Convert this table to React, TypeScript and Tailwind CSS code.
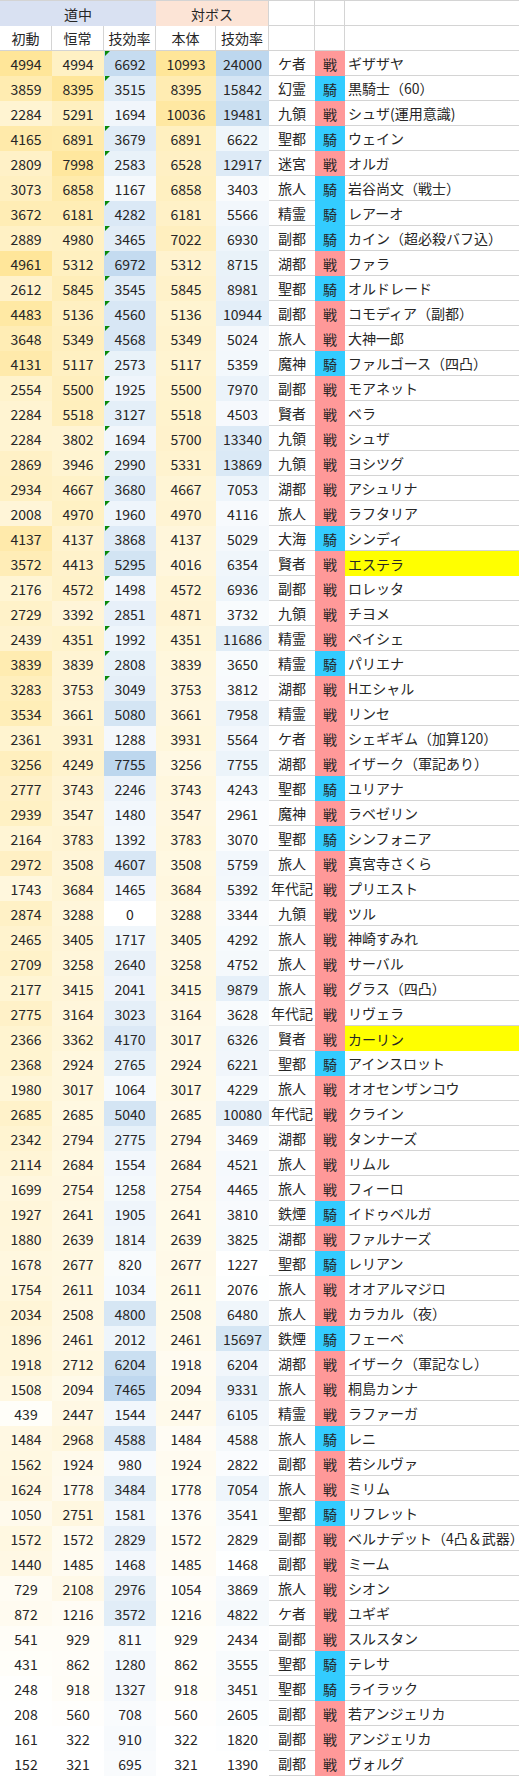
import React from "react"

type Row = [number, number, number, number, number, string, "戦" | "騎", string]

const rows: Row[] = [
  [4994, 4994, 6692, 10993, 24000, "ケ者", "戦", "ギザザヤ"],
  [3859, 8395, 3515, 8395, 15842, "幻霊", "騎", "黒騎士（60）"],
  [2284, 5291, 1694, 10036, 19481, "九領", "戦", "シュザ(運用意識)"],
  [4165, 6891, 3679, 6891, 6622, "聖都", "騎", "ウェイン"],
  [2809, 7998, 2583, 6528, 12917, "迷宮", "戦", "オルガ"],
  [3073, 6858, 1167, 6858, 3403, "旅人", "騎", "岩谷尚文（戦士）"],
  [3672, 6181, 4282, 6181, 5566, "精霊", "騎", "レアーオ"],
  [2889, 4980, 3465, 7022, 6930, "副都", "騎", "カイン（超必殺バフ込）"],
  [4961, 5312, 6972, 5312, 8715, "湖都", "戦", "ファラ"],
  [2612, 5845, 3545, 5845, 8981, "聖都", "騎", "オルドレード"],
  [4483, 5136, 4560, 5136, 10944, "副都", "戦", "コモディア（副都）"],
  [3648, 5349, 4568, 5349, 5024, "旅人", "戦", "大神一郎"],
  [4131, 5117, 2573, 5117, 5359, "魔神", "騎", "ファルゴース（四凸）"],
  [2554, 5500, 1925, 5500, 7970, "副都", "戦", "モアネット"],
  [2284, 5518, 3127, 5518, 4503, "賢者", "戦", "ベラ"],
  [2284, 3802, 1694, 5700, 13340, "九領", "戦", "シュザ"],
  [2869, 3946, 2990, 5331, 13869, "九領", "戦", "ヨシツグ"],
  [2934, 4667, 3680, 4667, 7053, "湖都", "戦", "アシュリナ"],
  [2008, 4970, 1960, 4970, 4116, "旅人", "戦", "ラフタリア"],
  [4137, 4137, 3868, 4137, 5029, "大海", "騎", "シンディ"],
  [3572, 4413, 5295, 4016, 6354, "賢者", "戦", "エステラ"],
  [2176, 4572, 1498, 4572, 6936, "副都", "戦", "ロレッタ"],
  [2729, 3392, 2851, 4871, 3732, "九領", "戦", "チヨメ"],
  [2439, 4351, 1992, 4351, 11686, "精霊", "戦", "ペイシェ"],
  [3839, 3839, 2808, 3839, 3650, "精霊", "騎", "パリエナ"],
  [3283, 3753, 3049, 3753, 3812, "湖都", "戦", "Hエシャル"],
  [3534, 3661, 5080, 3661, 7958, "精霊", "戦", "リンセ"],
  [2361, 3931, 1288, 3931, 5564, "ケ者", "戦", "シェギギム（加算120）"],
  [3256, 4249, 7755, 3256, 7755, "湖都", "戦", "イザーク（軍記あり）"],
  [2777, 3743, 2246, 3743, 4243, "聖都", "騎", "ユリアナ"],
  [2939, 3547, 1480, 3547, 2961, "魔神", "戦", "ラベゼリン"],
  [2164, 3783, 1392, 3783, 3070, "聖都", "騎", "シンフォニア"],
  [2972, 3508, 4607, 3508, 5759, "旅人", "戦", "真宮寺さくら"],
  [1743, 3684, 1465, 3684, 5392, "年代記", "戦", "プリエスト"],
  [2874, 3288, 0, 3288, 3344, "九領", "戦", "ツル"],
  [2465, 3405, 1717, 3405, 4292, "旅人", "戦", "神崎すみれ"],
  [2709, 3258, 2640, 3258, 4752, "旅人", "戦", "サーバル"],
  [2177, 3415, 2041, 3415, 9879, "旅人", "戦", "グラス（四凸）"],
  [2775, 3164, 3023, 3164, 3628, "年代記", "戦", "リヴェラ"],
  [2366, 3362, 4170, 3017, 6326, "賢者", "戦", "カーリン"],
  [2368, 2924, 2765, 2924, 6221, "聖都", "騎", "アインスロット"],
  [1980, 3017, 1064, 3017, 4229, "旅人", "戦", "オオセンザンコウ"],
  [2685, 2685, 5040, 2685, 10080, "年代記", "戦", "クライン"],
  [2342, 2794, 2775, 2794, 3469, "湖都", "戦", "タンナーズ"],
  [2114, 2684, 1554, 2684, 4521, "旅人", "戦", "リムル"],
  [1699, 2754, 1258, 2754, 4465, "旅人", "戦", "フィーロ"],
  [1927, 2641, 1905, 2641, 3810, "鉄煙", "騎", "イドゥベルガ"],
  [1880, 2639, 1814, 2639, 3825, "湖都", "戦", "ファルナーズ"],
  [1678, 2677, 820, 2677, 1227, "聖都", "騎", "レリアン"],
  [1754, 2611, 1034, 2611, 2076, "旅人", "戦", "オオアルマジロ"],
  [2034, 2508, 4800, 2508, 6480, "旅人", "戦", "カラカル（夜）"],
  [1896, 2461, 2012, 2461, 15697, "鉄煙", "騎", "フェーベ"],
  [1918, 2712, 6204, 1918, 6204, "湖都", "戦", "イザーク（軍記なし）"],
  [1508, 2094, 7465, 2094, 9331, "旅人", "戦", "桐島カンナ"],
  [439, 2447, 1544, 2447, 6105, "精霊", "戦", "ラファーガ"],
  [1484, 2968, 4588, 1484, 4588, "旅人", "騎", "レニ"],
  [1562, 1924, 980, 1924, 2822, "副都", "戦", "若シルヴァ"],
  [1624, 1778, 3484, 1778, 7054, "旅人", "戦", "ミリム"],
  [1050, 2751, 1581, 1376, 3541, "聖都", "騎", "リフレット"],
  [1572, 1572, 2829, 1572, 2829, "副都", "戦", "ベルナデット（4凸＆武器）"],
  [1440, 1485, 1468, 1485, 1468, "副都", "戦", "ミーム"],
  [729, 2108, 2976, 1054, 3869, "旅人", "戦", "シオン"],
  [872, 1216, 3572, 1216, 4822, "ケ者", "戦", "ユギギ"],
  [541, 929, 811, 929, 2434, "副都", "戦", "スルスタン"],
  [431, 862, 1280, 862, 3555, "聖都", "騎", "テレサ"],
  [248, 918, 1327, 918, 3451, "聖都", "騎", "ライラック"],
  [208, 560, 708, 560, 2605, "副都", "戦", "若アンジェリカ"],
  [161, 322, 910, 322, 1820, "副都", "戦", "アンジェリカ"],
  [152, 321, 695, 321, 1390, "副都", "戦", "ヴォルグ"],
]

// names marked with a yellow fill
const highlighted = new Set(["エステラ", "カーリン"])

const YELLOW: [number, number, number] = [255, 230, 153]
const BLUE: [number, number, number] = [189, 215, 238]
const colColors = [YELLOW, YELLOW, BLUE, YELLOW, BLUE]

const ranges = [0, 1, 2, 3, 4].map(i => {
  const vals = rows.map(r => r[i] as number)
  return [Math.min(...vals), Math.max(...vals)]
})

function scaleColor(v: number, col: number) {
  const [min, max] = ranges[col]
  const t = max === min ? 0 : (v - min) / (max - min)
  const c = colColors[col].map(x => Math.round(255 + (x - 255) * t))
  return `rgb(${c.join(",")})`
}

const cell = "flex h-[25px] items-center justify-center leading-none"
const line = "border-[#d4d4d4]"

export default function App() {
  return (
    <div className="w-[519px] overflow-hidden border-t border-[#d4d4d4] bg-white font-['Noto_Sans_CJK_JP',sans-serif] text-[14px] text-[#262626]">
      <div className="grid grid-cols-[52px_52px_52px_60px_53px_46px_30px_1fr]">
        {/* header row 1 */}
        <div className={`${cell} col-span-3 bg-[#d9e1f2]`}>道中</div>
        <div className={`${cell} col-span-2 border-r ${line} bg-[#fce4d6]`}>対ボス</div>
        <div className={`${cell} border-r border-b ${line}`}></div>
        <div className={`${cell} border-r border-b ${line}`}></div>
        <div className={`${cell} border-b ${line}`}></div>

        {/* header row 2 */}
        {["初動", "恒常", "技効率", "本体", "技効率"].map((h, i) => (
          <div key={i} className={`${cell} border-r border-b ${line}`}>{h}</div>
        ))}
        <div className={`${cell} border-r border-b ${line}`}></div>
        <div className={`${cell} border-r border-b ${line}`}></div>
        <div className={`${cell} border-b ${line}`}></div>

        {rows.map((r, ri) => {
          const flagged = ri < 26 && ri !== 2 && ri !== 5
          const hl = highlighted.has(r[7])
          return (
            <React.Fragment key={ri}>
              {[0, 1, 2, 3, 4].map(ci => (
                <div
                  key={ci}
                  className={`${cell} relative`}
                  style={{ backgroundColor: scaleColor(r[ci] as number, ci) }}
                >
                  {ci === 2 && flagged && (
                    <span className="absolute left-px top-0 h-0 w-0 border-t-[5px] border-r-[5px] border-t-[#0a8a0a] border-r-transparent" />
                  )}
                  {r[ci]}
                </div>
              ))}
              <div className={`${cell} whitespace-nowrap border-b ${line}`}>{r[5]}</div>
              <div className={`${cell} ${r[6] === "戦" ? "bg-[#ff9999]" : "bg-[#33ccff]"}`}>{r[6]}</div>
              <div
                className={`${cell} justify-start overflow-hidden whitespace-nowrap pl-[3px] ${
                  hl ? "bg-[#ffff00]" : `border-b ${line}`
                }`}
              >
                {r[7]}
              </div>
            </React.Fragment>
          )
        })}
      </div>
    </div>
  )
}
